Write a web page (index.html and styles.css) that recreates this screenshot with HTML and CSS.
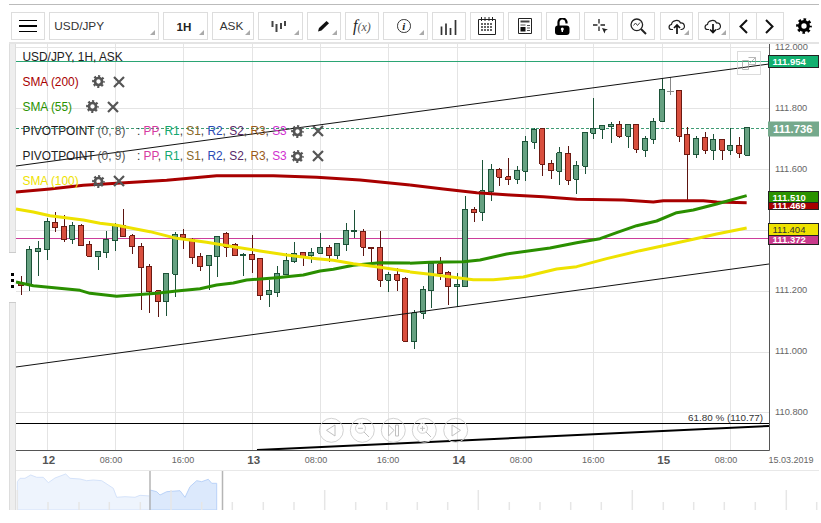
FILE: index.html
```html
<!DOCTYPE html>
<html lang="en">
<head>
<meta charset="utf-8">
<title>USD/JPY chart</title>
<link rel="stylesheet" href="styles.css">
</head>
<body>
<svg class="defs" width="0" height="0" aria-hidden="true">
  <symbol id="gear" viewBox="0 0 24 24">
    <circle cx="12" cy="12" r="6.5" fill="none" stroke="currentColor" stroke-width="5"/>
    <circle cx="12" cy="12" r="9.6" fill="none" stroke="currentColor" stroke-width="4.4" stroke-dasharray="3.77 3.77" stroke-dashoffset="1.88"/>
  </symbol>
  <symbol id="cross" viewBox="0 0 12 12">
    <path d="M1 1L11 11M11 1L1 11" fill="none" stroke="currentColor" stroke-width="2.2"/>
  </symbol>
</svg>

<div class="rule"></div>

<div class="toolbar">
  <div class="btn icon-btn"><span class="burger"><i></i><i></i><i></i></span></div>
  <div class="btn sym caret">USD/JPY</div>
  <div class="btn tf caret">1H</div>
  <div class="btn ask caret">ASK</div>
  <div class="btn type caret">
    <svg class="ic shift-l" width="16" height="13" viewBox="0 0 16 13"><path d="M1.500 1V7M5.500 4V12M10 3V9M14 1V6" stroke="#444" stroke-width="2"/></svg>
  </div>
  <div class="btn icon-btn caret">
    <svg class="ic" width="13" height="12" viewBox="0 0 13 12"><path d="M1 11.500L2 8L9.500 1L12 3.200L4.500 10.500Z" fill="#111"/></svg>
  </div>
  <div class="btn icon-btn"><span class="fx"><em class="fx-f">f</em><em class="fx-x">(x)</em></span></div>
  <div class="btn info-btn caret"><span class="info">i</span></div>
  <div class="btn icon-btn">
    <svg width="17" height="17" viewBox="0 0 17 17"><path d="M1.500 17V8.500M6 17V5.500M10.500 17V10M15.500 17V2" stroke="#333" stroke-width="1.700"/></svg>
  </div>
  <div class="btn icon-btn">
    <svg width="18" height="18" viewBox="0 0 18 18"><path d="M.5 2.500H17.500V17.500H.5Z" fill="none" stroke="#222"/><path d="M3.500 0V4M7 0V4M11 0V4M14.500 0V4" stroke="#222"/><path d="M3 7H15M3 10H15M3 13H15" stroke="#333" stroke-width="1.600" stroke-dasharray="2 1"/></svg>
  </div>
  <div class="btn icon-btn">
    <svg width="14" height="16" viewBox="0 0 14 16"><path d="M.5 .5H13.500V15.500H.5Z" fill="none" stroke="#222"/><path d="M2.500 3.500H11.500" stroke="#444" stroke-width="2"/><rect x="2.500" y="9" width="5" height="4.500" fill="#111"/><path d="M9 7.500H12M9 10H12M9 12.500H12M2.500 7H7.500" stroke="#555"/></svg>
  </div>
  <div class="btn icon-btn">
    <svg width="15" height="17" viewBox="0 0 15 17"><path d="M3.500 8V5A4 4 0 0 1 11.500 4V5.500" fill="none" stroke="#000" stroke-width="2.200"/><rect x="0" y="7.500" width="14.500" height="9.500" rx="3" fill="#000"/><circle cx="7.300" cy="11" r="1.500" fill="#fff"/><path d="M7.300 11V14" stroke="#fff" stroke-width="1.400"/></svg>
  </div>
  <div class="btn icon-btn">
    <svg width="15" height="15" viewBox="0 0 15 15"><path d="M6 0V4.500M6 7.500V12M0 6H4.500M7.500 6H12" stroke="#222" stroke-width="1.300"/><path d="M9 9L15 10.500L12.500 11.500L11.500 14.500Z" fill="#222"/></svg>
  </div>
  <div class="btn icon-btn">
    <svg width="17" height="17" viewBox="0 0 17 17"><circle cx="6.800" cy="6.800" r="5.800" fill="none" stroke="#222" stroke-width="1.300"/><path d="M11 11L16 16" stroke="#222" stroke-width="2"/><path d="M3.500 7.500L5.500 5L7.500 7.500L10 4.500" fill="none" stroke="#444"/></svg>
  </div>
  <div class="btn icon-btn caret">
    <svg width="18" height="15" viewBox="0 0 18 15"><path d="M5 10.500H3.500C.5 10.500 0 6 3.500 5.500C4 1 11 0 12.500 4C16.500 3.500 18.500 9.500 13.500 10.500H12.500" fill="none" stroke="#222" stroke-width="1.200"/><path d="M9 15V6.500M6 9L9 6L12 9" fill="none" stroke="#111" stroke-width="1.700"/></svg>
  </div>
  <div class="btn dl caret">
    <svg width="18" height="15" viewBox="0 0 18 15"><path d="M5 10.500H3.500C.5 10.500 0 6 3.500 5.500C4 1 11 0 12.500 4C16.500 3.500 18.500 9.500 13.500 10.500H12.500" fill="none" stroke="#222" stroke-width="1.200"/><path d="M9 5V13.500M6 10.500L9 13.500L12 10.500" fill="none" stroke="#111" stroke-width="1.700"/></svg>
  </div>
  <div class="nav-pair">
    <div class="arrow"><svg width="9" height="15" viewBox="0 0 9 15"><path d="M8 1L1.500 7.500L8 14" fill="none" stroke="#111" stroke-width="2"/></svg></div>
    <div class="arrow"><svg width="9" height="15" viewBox="0 0 9 15"><path d="M1 1L7.500 7.500L1 14" fill="none" stroke="#111" stroke-width="2"/></svg></div>
  </div>
  <svg class="main-gear" width="16" height="16"><use href="#gear"/></svg>
</div>
<div class="sep"></div>

<div class="workspace">
  <div class="strip">
    <div class="handle"><i></i><i></i><i></i></div>
  </div>
  <div class="charts">
    <div class="plot">
      <svg class="chart" width="803" height="426" viewBox="16 44 803 426">
        <g class="grid">
          <path d="M16 47.500H769M16 108.500H769M16 169.500H769M16 230.500H769M16 291.500H769M16 352.500H769M16 412.500H769"/>
          <path d="M47.500 44V450M115.500 44V450M183.500 44V450M252.500 44V450M320.500 44V450M388.500 44V450M457.500 44V450M525.500 44V450M593.500 44V450M662.500 44V450M730.500 44V450"/>
        </g>

        <path class="flat-green" d="M16 61.500H769"/>
        <path class="flat-dash" d="M16 128.500H769"/>
        <path class="flat-pink" d="M16 238.500H769"/>

        <g class="candles" transform="translate(0 190) scale(.33333)">
          <path class="wick-r" d="M64 258V315M166 66V125M193 75V155M244 103V167M268 153V200M370 57V140M397 133V192M424 160V360M448 223V369M475 300V380M550 117V177M577 145V222M601 190V243M679 127V201M706 160V197M757 135V249M781 205V330M910 185V228M988 166V216M1090 118V198M1114 172V220M1141 124V291M1192 235V303M1216 262V455"/>
          <path class="wick-g" d="M88 168V302M115 153V258M142 85V210M217 97V162M295 184V240M319 123V204M346 100V182M499 250V378M526 127V320M628 196V300M652 139V261M730 190V258M808 270V351M832 228V321M859 190V255M883 156V218M934 175V218M961 129V192M1012 160V208M1039 99V183M1063 60V143M1165 246V306"/>
          <path class="body-r" d="M56 280h16v7h-16zM158 97h16v16h-16zM185 109h16v40h-16zM236 106h16v61h-16zM260 163h16v36h-16zM362 106h16v34h-16zM389 137h16v33h-16zM416 169h16v64h-16zM440 229h16v76h-16zM467 302h16v33h-16zM542 133h16v10h-16zM569 148h16v55h-16zM593 199h16v31h-16zM671 130h16v42h-16zM698 163h16v34h-16zM749 193h16v16h-16zM773 205h16v112h-16zM902 187h16v12h-16zM980 172h16v25h-16zM1082 124h16v48h-16zM1106 172h16v4h-16zM1133 172h16v99h-16zM1184 253h16v18h-16zM1208 265h16v189h-16z"/>
          <path class="body-g" d="M80 178h16v107h-16zM107 175h16v10h-16zM134 94h16v85h-16zM209 106h16v42h-16zM287 184h16v16h-16zM311 148h16v40h-16zM338 106h16v46h-16zM491 250h16v85h-16zM518 133h16v120h-16zM620 196h16v31h-16zM644 139h16v61h-16zM722 193h16v4h-16zM800 301h16v13h-16zM824 250h16v58h-16zM851 211h16v43h-16zM875 190h16v25h-16zM926 187h16v10h-16zM953 172h16v18h-16zM1004 160h16v37h-16zM1031 121h16v43h-16zM1055 121h16v4h-16zM1157 253h16v18h-16z"/>
        </g>

        <g class="candles" transform="translate(410 0) scale(.33333)">
          <path class="wick-r" d="M91 771V840M115 813V915M193 620V665M268 505V558M295 475V556M397 385V527M424 480V537M475 438V555M628 363V415M679 372V458M808 270V425M832 380V600M886 397V463M937 418V479M988 411V473"/>
          <path class="wick-g" d="M13 930V1047M40 858V957M64 790V924M142 820V920M166 588V860M217 480V662M244 492V602M322 498V552M346 408V543M373 385V446M448 440V555M499 482V581M526 397V521M550 295V418M577 376V418M604 365V428M655 372V443M706 408V470M730 355V432M757 235V364M859 408V473M910 403V480M961 385V464M1012 382V466"/>
          <path class="wick-gray" d="M781 232V285M770 275H792"/>
          <path class="body-r" d="M83 792h16v29h-16zM107 817h16v43h-16zM185 628h16v10h-16zM260 508h16v24h-16zM287 530h16v9h-16zM389 386h16v107h-16zM416 490h16v22h-16zM467 460h16v81h-16zM620 373h16v36h-16zM671 373h16v75h-16zM800 271h16v138h-16zM824 403h16v61h-16zM878 412h16v39h-16zM929 418h16v33h-16zM980 436h16v24h-16z"/>
          <path class="body-g" d="M5 938h16v87h-16zM32 868h16v72h-16zM56 790h16v82h-16zM134 853h16v7h-16zM158 628h16v232h-16zM209 572h16v65h-16zM236 508h16v67h-16zM314 511h16v27h-16zM338 424h16v90h-16zM365 388h16v39h-16zM440 458h16v56h-16zM491 496h16v42h-16zM518 397h16v102h-16zM542 385h16v15h-16zM569 376h16v12h-16zM596 373h16v7h-16zM647 373h16v36h-16zM698 415h16v36h-16zM722 364h16v54h-16zM749 268h16v96h-16zM851 415h16v49h-16zM902 418h16v33h-16zM953 436h16v15h-16zM1004 382h16v84h-16z"/>
        </g>

        <path class="channel" d="M16 166L769 64M16 367L769 264"/>
        <path class="fib" d="M16 423.500H769"/>
        <path class="fib-thick" d="M257 450L769 426"/>

        <g class="sma" transform="scale(.33333)">
          <polyline class="s200" points="48,576 150,567 250,556 350,550 500,541 650,527 820,527 950,532 1080,540 1230,555"/>
        </g>
        <g class="sma" transform="translate(410 0) scale(.33333)">
          <polyline class="s200" points="0,555 100,567 200,578 300,585 400,590 500,598 640,600 730,606 760,602 880,602 920,606 1010,608"/>
          <polyline class="s55" points="0,790 60,787 160,785 210,780 290,762 360,752 420,744 500,728 570,716 620,698 680,677 740,663 800,638 850,630 920,612 1010,587"/>
          <polyline class="s100" points="0,816 60,823 130,832 190,839 250,839 340,831 440,807 500,800 590,776 690,752 850,718 920,702 1010,684"/>
        </g>
        <g class="sma" transform="translate(0 190) scale(.33333)">
          <polyline class="s55" points="48,276 100,287 170,294 240,301 270,310 350,319 400,315 470,310 530,303 600,296 650,285 700,279 740,270 830,263 910,255 960,243 1000,238 1060,226 1140,218 1230,219"/>
          <polyline class="s100" points="48,57 100,66 150,77 250,90 300,100 350,106 450,125 530,145 620,157 700,170 780,183 860,195 950,206 1000,211 1060,221 1140,232 1230,245"/>
        </g>

        <g class="popout">
          <rect x="737.500" y="51.500" width="23" height="23"/>
          <path d="M742.500 60.500H748.500V69.500H742.500ZM748.500 57.500H755.500V64.500H748.500M750 63L755 58M751.500 57.500H755.500V61"/>
        </g>

        <path class="frame" d="M769.500 44V450.500H16"/>

        <text class="px" x="775" y="50">112.000</text>
        <text class="px" x="775" y="111">111.800</text>
        <text class="px" x="775" y="172">111.600</text>
        <text class="px" x="775" y="293">111.200</text>
        <text class="px" x="775" y="354">111.000</text>
        <text class="px" x="775" y="415">110.800</text>

        <rect class="tag-b c-green" x="768.500" y="55.500" width="50" height="12"/>
        <text class="tag-t" x="772.500" y="65">111.954</text>
        <rect class="c-last" x="768" y="121.500" width="51" height="15"/>
        <text class="tag-last" x="773" y="133">111.736</text>
        <rect class="tag-b c-red" x="768.500" y="202.500" width="50" height="7"/>
        <text class="tag-t" x="772.500" y="208.500">111.469</text>
        <rect class="tag-b c-sma55" x="768.500" y="191.500" width="50" height="11"/>
        <text class="tag-t" x="772.500" y="200.500">111.510</text>
        <rect class="tag-b c-pink" x="768.500" y="235.500" width="50" height="9"/>
        <text class="tag-t" x="772.500" y="242.500">111.372</text>
        <rect class="tag-b c-yellow" x="768.500" y="223.500" width="50" height="12"/>
        <text class="tag-d" x="772.500" y="233">111.404</text>

        <text class="fib-label" x="688" y="421">61.80 % (110.77)</text>

        <g class="pan">
          <circle cx="331.300" cy="430.300" r="12"/>
          <path d="M335 425L326.500 430.300L335 436Z"/>
          <circle cx="362.300" cy="430.300" r="12"/>
          <circle cx="360.500" cy="428.300" r="5"/><path d="M364 432L369 437M358 428.300H363"/>
          <circle cx="393.300" cy="430.300" r="12"/>
          <path d="M388.500 425L394 430.300L388.500 436ZM395.500 425H398.500V436H395.500Z"/>
          <circle cx="424.300" cy="430.300" r="12"/>
          <circle cx="422.500" cy="428.300" r="5"/><path d="M426 432L431 437M420 428.300H425M422.500 426V431"/>
          <circle cx="455.700" cy="430.300" r="12"/>
          <path d="M452 425L460.500 430.300L452 436Z"/>
        </g>

        <g class="times">
          <text class="day" x="48.700" y="464">12</text>
          <text x="111" y="462.500">08:00</text>
          <text x="183" y="462.500">16:00</text>
          <text class="day" x="253.700" y="464">13</text>
          <text x="316" y="462.500">08:00</text>
          <text x="388" y="462.500">16:00</text>
          <text class="day" x="459" y="464">14</text>
          <text x="521" y="462.500">08:00</text>
          <text x="593.300" y="462.500">16:00</text>
          <text class="day" x="663.700" y="464">15</text>
          <text x="726" y="462.500">08:00</text>
          <text x="791" y="462.500">15.03.2019</text>
        </g>
      </svg>

      <div class="legend">
        <div class="row">USD/JPY, 1H, ASK</div>
        <div class="row t-200"><span>SMA (200)</span><span class="tools wide"><svg width="13" height="13"><use href="#gear"/></svg><svg width="12" height="12"><use href="#cross"/></svg></span></div>
        <div class="row t-55"><span>SMA (55)</span><span class="tools wide"><svg width="13" height="13"><use href="#gear"/></svg><svg width="12" height="12"><use href="#cross"/></svg></span></div>
        <div class="row"><span>PIVOTPOINT <b class="arg">(0, 8)</b></span><span class="pv"><b class="arg">:</b> <b class="pp">PP</b>, <b class="r1">R1</b>, <b class="s1">S1</b>, <b class="r2">R2</b>, <b class="s2">S2</b>, <b class="r3">R3</b>, <b class="s3">S3</b></span><span class="tools"><svg width="13" height="13"><use href="#gear"/></svg><svg width="12" height="12"><use href="#cross"/></svg></span></div>
        <div class="row"><span>PIVOTPOINT <b class="arg">(0, 9)</b></span><span class="pv"><b class="arg">:</b> <b class="pp">PP</b>, <b class="r1">R1</b>, <b class="s1">S1</b>, <b class="r2">R2</b>, <b class="s2">S2</b>, <b class="r3">R3</b>, <b class="s3">S3</b></span><span class="tools"><svg width="13" height="13"><use href="#gear"/></svg><svg width="12" height="12"><use href="#cross"/></svg></span></div>
        <div class="row t-100"><span>SMA (100)</span><span class="tools wide"><svg width="13" height="13"><use href="#gear"/></svg><svg width="12" height="12"><use href="#cross"/></svg></span></div>
      </div>
    </div>

    <svg class="navigator" width="803" height="40" viewBox="16 470 803 40">
      <path class="nav-top" d="M16 470.500H819"/>
      <path class="nav-area" d="M17.300 510V481.700L20 478.300L25 478.300L30.700 475L36.700 477.300L43.300 477.300L48.300 482.700L55 478L65.700 474L70 478.300L80 479L86.700 480.700L93.300 480L101.700 480.700L113.300 488.300L116.700 497.300L125 496.700L135 497.300L140 495.300L150 496L150 510Z"/>
      <path class="nav-sel" d="M150 510V490L156.700 491.700L160 495L166.700 491.700L180 490.700L185 497.300L190 486.700L196.700 480.700L201.700 481.700L208.300 479.300L211.700 483.300L216.700 483.300V510Z"/>
      <g class="nav-ticks">
        <path d="M48 502V510M79 502V510M109.300 502V510M140.300 502V510M201.700 502V510M232.300 502V510M263.300 502V510M294 502V510M355.700 502V510M386.700 502V510M417.300 502V510M447.700 502V510M509.300 502V510M540 502V510M570.700 502V510M601.300 502V510M663.300 502V510M693.700 502V510M724.300 502V510M755.300 502V510M816.700 502V510"/>
        <path d="M17.300 490V510M171 490V510M324.700 490V510M478.300 490V510M632.300 490V510M786.300 490V510"/>
      </g>
      <path class="nav-handle" d="M150 471V510M222.500 471V510"/>
    </svg>
  </div>
</div>
</body>
</html>
```

FILE: styles.css
```css
* { box-sizing: border-box; }

html, body {
  margin: 0;
  padding: 0;
  background: #fff;
}

body {
  width: 821px;
  height: 523px;
  overflow: hidden;
  font-family: "Liberation Sans", Arial, sans-serif;
  color: #222;
}

.defs { position: absolute; }

.rule {
  height: 1px;
  margin: 4px 2px 0 9px;
  background: #bbb;
}

.toolbar {
  display: flex;
  align-items: center;
  height: 28px;
  margin-top: 7px;
  padding-left: 11.3px;
}

.btn {
  position: relative;
  flex: none;
  display: flex;
  align-items: center;
  justify-content: center;
  width: 33.4px;
  height: 28px;
  margin-right: 4.6px;
  border: 1px solid #ddd;
  font-size: 11.8px;
}

.sym { width: 109.4px; justify-content: flex-start; padding-left: 4px; color: #333; }
.tf { width: 44.4px; font-weight: bold; font-size: 11.6px; color: #222; padding-right: 3px; }
.ask { width: 41.4px; padding-right: 3px; color: #333; }
.type { width: 44.4px; }
.info-btn { width: 44.4px; }
.dl { width: 31px; margin-right: 0; border-right: 0; padding-left: 5px; justify-content: flex-start; }
.shift-l { margin-right: 2px; }

.caret::after {
  content: "";
  position: absolute;
  right: 3px;
  bottom: 4px;
  border-style: solid;
  border-width: 0 0 5.5px 5.5px;
  border-color: transparent transparent #aaa transparent;
}

.burger { display: flex; flex-direction: column; gap: 4.2px; width: 18px; }
.burger i { display: block; height: 1.500px; background: #000; }

.fx { font-family: "Liberation Serif", serif; color: #333; white-space: nowrap; }
.fx-f { font-size: 16px; color: #222; }
.fx-x { font-size: 12px; color: #555; }

.info {
  display: flex;
  align-items: center;
  justify-content: center;
  width: 13.500px;
  height: 13.500px;
  margin-left: -3px;
  border: 1px solid #333;
  border-radius: 50%;
  font: italic bold 11px "Liberation Serif", serif;
  color: #222;
}

.nav-pair { display: flex; flex: none; margin-left: .3px; }

.arrow {
  display: flex;
  align-items: center;
  justify-content: center;
  width: 27.400px;
  height: 28px;
  border: 1px solid #ddd;
}

.arrow + .arrow { border-left: 0; }

.main-gear { flex: none; margin-left: 12px; color: #000; }

.sep {
  height: 1.500px;
  margin: 2px 2px 0 9px;
  background: #e4e4e4;
}

.workspace {
  display: flex;
  margin-left: 9px;
  height: 466.500px;
}

.strip {
  flex: none;
  width: 7px;
  padding-top: 208.500px;
  background: #eee;
  border-left: 1px solid #ddd;
  border-right: 1px solid #ddd;
}

.handle {
  display: flex;
  flex-direction: column;
  align-items: center;
  gap: 3px;
  height: 51px;
  padding-top: 20px;
  margin-left: -1px;
  width: 7px;
  background: #fff;
  border-top: 1px solid #ccc;
  border-bottom: 1px solid #ccc;
}

.handle i { display: block; flex: none; width: 3px; height: 3px; background: #000; }

.charts { flex: none; width: 803px; }

.plot { position: relative; height: 426px; }

.chart, .navigator { display: block; }
.chart { overflow: visible; }

.grid path { fill: none; stroke: #e4e4e4; stroke-width: 1; }

.flat-green { stroke: #2ba574; stroke-width: 1; }
.flat-dash { stroke: #3f9c74; stroke-width: 1; stroke-dasharray: 3 2; }
.flat-pink { stroke: #cc3d9b; stroke-width: 1; }

.candles path { shape-rendering: crispEdges; fill: none; stroke-width: 3; }
.wick-r { stroke: #5c1410; }
.wick-g { stroke: #1c5238; }
.wick-gray { stroke: #888; }
.candles .body-r { fill: #d94f3e; stroke: #6b1a12; stroke-width: 3; }
.candles .body-g { fill: #66a181; stroke: #1c5238; stroke-width: 3; }

.channel { fill: none; stroke: #111; stroke-width: 1; }
.fib { stroke: #000; stroke-width: 1; }
.fib-thick { stroke: #000; stroke-width: 2; }

.sma polyline { fill: none; stroke-width: 9; stroke-linejoin: round; stroke-linecap: butt; }
.s200 { stroke: #a80000; }
.s55 { stroke: #2a8f00; }
.s100 { stroke: #eee200; }

.popout { fill: none; stroke: #999; stroke-width: 1; opacity: .7; }
.popout rect { stroke: #ccc; }

.frame { fill: none; stroke: #555; stroke-width: 1; }

.px { font-size: 9.300px; fill: #666; }

.tag-b { stroke: #222; stroke-width: 1; }
.c-green { fill: #12b06f; }
.c-last { fill: #75a98c; }
.c-red { fill: #a80000; }
.c-sma55 { fill: #2a9200; }
.c-pink { fill: #c93a8c; }
.c-yellow { fill: #eee200; }
.tag-t { font-size: 9.500px; font-weight: bold; fill: #fff; }
.tag-d { font-size: 9.500px; fill: #333; }
.tag-last { font-size: 11.300px; font-weight: bold; fill: #fff; }

.fib-label { font-size: 9.900px; fill: #333; }

.pan { fill: none; stroke: #d2d2d2; stroke-width: 1; }
.pan path { stroke: #c0c0c0; }

.times text { font-size: 9px; fill: #666; text-anchor: middle; }
.times .day { font-size: 11.500px; font-weight: bold; fill: #555; }

.legend {
  position: absolute;
  left: 6.500px;
  top: 1.200px;
  display: flex;
  flex-direction: column;
  font-size: 11.900px;
  color: #222;
}

.row {
  display: flex;
  align-items: center;
  height: 24.800px;
  white-space: pre;
}

.t-200 { color: #a80000; }
.t-55 { color: #2a9200; }
.t-100 { color: #eee200; }

.arg { font-weight: normal; color: #555; }
.pv { margin-left: 11.500px; color: #444; }
.pv b { font-weight: normal; }
.pv .arg { color: #333; }
.pp { color: #d63aa0; }
.r1 { color: #12a870; }
.s1 { color: #8a6a2a; }
.r2 { color: #2a4ab5; }
.s2 { color: #5a2a6a; }
.r3 { color: #9a5a1a; }
.s3 { color: #d030d0; }

.tools {
  display: flex;
  align-items: center;
  gap: 8px;
  margin-left: 4.500px;
  color: #555;
}

.tools.wide { margin-left: 13.500px; }

.nav-top { stroke: #e8e8e8; stroke-width: 1; }
.nav-area { fill: #eef4fd; stroke: #d5e3fa; stroke-width: 1; }
.nav-sel { fill: #dce9fc; stroke: #b9d2f8; stroke-width: 1; }
.nav-ticks path { stroke: #e6e6e6; stroke-width: 1.500; }
.nav-handle { stroke: #b5b5b5; stroke-width: 1.500; }
```
